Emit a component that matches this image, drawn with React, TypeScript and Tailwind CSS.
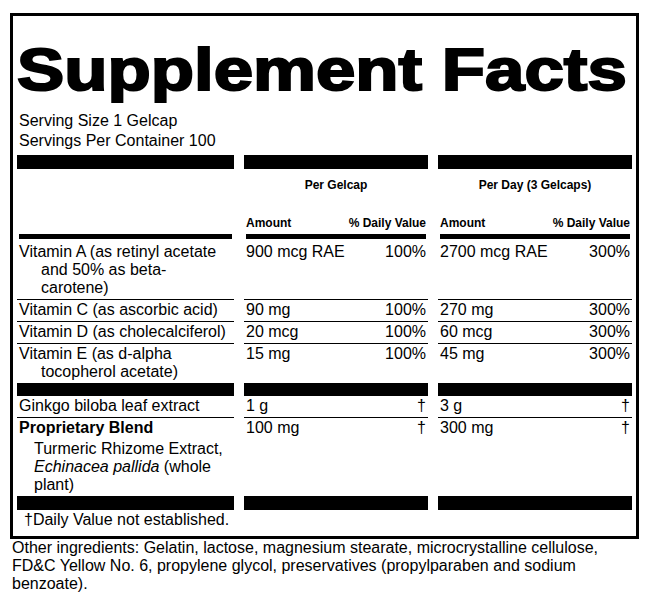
const rows = [
  {
    name: 'Vitamin A (as retinyl acetate and 50% as beta-carotene)',
    a1: '900 mcg RAE',
    d1: '100%',
    a2: '2700 mcg RAE',
    d2: '300%',
  },
  { name: 'Vitamin C (as ascorbic acid)', a1: '90 mg', d1: '100%', a2: '270 mg', d2: '300%' },
  { name: 'Vitamin D (as cholecalciferol)', a1: '20 mcg', d1: '100%', a2: '60 mcg', d2: '300%' },
  { name: 'Vitamin E (as d-alpha tocopherol acetate)', a1: '15 mg', d1: '100%', a2: '45 mg', d2: '300%' },
];

function Bars({ h }: { h: string }) {
  return (
    <div className="grid grid-cols-[217px_184px_194px] gap-x-[10px]">
      <div className={`${h} bg-black`} />
      <div className={`${h} bg-black`} />
      <div className={`${h} bg-black`} />
    </div>
  );
}

export default function App() {
  return (
    <div className="pl-[10px] pt-[13px] font-['Liberation_Sans',Arial,sans-serif] text-black">
      <div className="w-[629px] border-[3px] border-black px-[4px] pb-[7px]">
        <div className="whitespace-nowrap pt-[25px] text-[59px] font-bold leading-[59px]">
          <span className="inline-block origin-left scale-x-[1.2] [-webkit-text-stroke:2px_black]">
            Supplement Facts
          </span>
        </div>

        <div className="mt-[11px] px-[2px] text-[16px] leading-[20px]">
          <div>Serving Size 1 Gelcap</div>
          <div>Servings Per Container 100</div>
        </div>

        <div className="mt-[4px]">
          <Bars h="h-[14px]" />
        </div>

        {/* column headings */}
        <div className="grid grid-cols-[217px_184px_194px] gap-x-[10px] text-[12px] font-bold leading-[14px]">
          <div />
          <div className="pt-[9px] text-center">Per Gelcap</div>
          <div className="pt-[9px] text-center">Per Day (3 Gelcaps)</div>

          <div />
          <div className="mt-[24px] flex justify-between px-[2px]">
            <span>Amount</span>
            <span>% Daily Value</span>
          </div>
          <div className="mt-[24px] flex justify-between px-[2px]">
            <span>Amount</span>
            <span>% Daily Value</span>
          </div>

          <div className="mx-[2px] mb-[3px] mt-[4px] h-[5px] bg-black" />
          <div className="mx-[2px] mb-[3px] mt-[4px] h-[5px] bg-black" />
          <div className="mx-[2px] mb-[3px] mt-[4px] h-[5px] bg-black" />
        </div>

        {/* vitamins */}
        <div className="grid grid-cols-[217px_184px_194px] gap-x-[10px] text-[16px] leading-[18px]">
          {rows.map((r, i) => {
            const line = i < rows.length - 1 ? 'border-b border-black' : '';
            return [
              <div key={`n${i}`} className={`pl-[2px] pr-[4px] pb-[2px] pt-[1px] ${line}`}>
                <div className="-indent-[22px] pl-[22px]">{r.name}</div>
              </div>,
              <div key={`a${i}`} className={`flex justify-between px-[2px] pb-[2px] pt-[1px] ${line}`}>
                <span>{r.a1}</span>
                <span>{r.d1}</span>
              </div>,
              <div key={`b${i}`} className={`flex justify-between px-[2px] pb-[2px] pt-[1px] ${line}`}>
                <span>{r.a2}</span>
                <span>{r.d2}</span>
              </div>,
            ];
          })}
        </div>

        <Bars h="h-[13px]" />

        {/* botanicals */}
        <div className="grid grid-cols-[217px_184px_194px] gap-x-[10px] text-[16px] leading-[18px]">
          <div className="border-b border-black px-[2px] pb-[2px] pt-[1px]">Ginkgo biloba leaf extract</div>
          <div className="flex justify-between border-b border-black px-[2px] pb-[2px] pt-[1px]">
            <span>1 g</span>
            <span>†</span>
          </div>
          <div className="flex justify-between border-b border-black px-[2px] pb-[2px] pt-[1px]">
            <span>3 g</span>
            <span>†</span>
          </div>

          <div className="px-[2px] pb-[2px] pt-[1px] font-bold">Proprietary Blend</div>
          <div className="flex justify-between px-[2px] pb-[2px] pt-[1px]">
            <span>100 mg</span>
            <span>†</span>
          </div>
          <div className="flex justify-between px-[2px] pb-[2px] pt-[1px]">
            <span>300 mg</span>
            <span>†</span>
          </div>

          <div className="pb-[2px] pl-[17px] pr-[2px] pt-[1px]">
            Turmeric Rhizome Extract, <i>Echinacea pallida</i> (whole plant)
          </div>
          <div />
          <div />
        </div>

        <Bars h="h-[14px]" />

        <div className="pl-[7px] pt-[1px] text-[16px] leading-[18px]">†Daily Value not established.</div>
      </div>

      <p className="w-[629px] pl-[2px] text-[16px] leading-[18px]">
        Other ingredients: Gelatin, lactose, magnesium stearate, microcrystalline cellulose, FD&amp;C Yellow
        No. 6, propylene glycol, preservatives (propylparaben and sodium benzoate).
      </p>
    </div>
  );
}
